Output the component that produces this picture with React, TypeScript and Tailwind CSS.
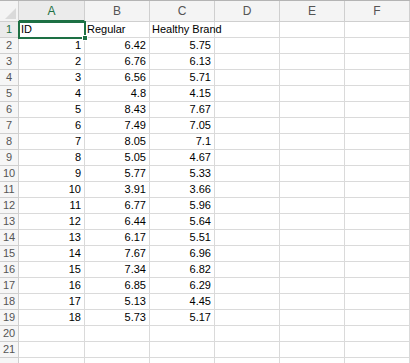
import React from "react";

const data: [number, string, string][] = [
  [1, "6.42", "5.75"],
  [2, "6.76", "6.13"],
  [3, "6.56", "5.71"],
  [4, "4.8", "4.15"],
  [5, "8.43", "7.67"],
  [6, "7.49", "7.05"],
  [7, "8.05", "7.1"],
  [8, "5.05", "4.67"],
  [9, "5.77", "5.33"],
  [10, "3.91", "3.66"],
  [11, "6.77", "5.96"],
  [12, "6.44", "5.64"],
  [13, "6.17", "5.51"],
  [14, "7.67", "6.96"],
  [15, "7.34", "6.82"],
  [16, "6.85", "6.29"],
  [17, "5.13", "4.45"],
  [18, "5.73", "5.17"],
];

const cols = ["A", "B", "C", "D", "E", "F"];

export default function App() {
  const rows: string[][] = [];
  rows.push(["ID", "Regular", "Healthy Brand", "", "", ""]);
  data.forEach((d) => rows.push([String(d[0]), d[1], d[2], "", "", ""]));
  rows.push(["", "", "", "", "", ""]);
  rows.push(["", "", "", "", "", ""]);
  rows.push(["", "", "", "", "", ""]);

  return (
    <div
      className="w-[410px] h-[363px] overflow-hidden bg-white relative"
      style={{ fontFamily: '"Liberation Sans", Arial, sans-serif' }}
    >
      <div className="grid grid-cols-[19px_66px_65px_65px_65px_65px_65px] border-t border-[#b4b4b4]">
        {/* header row */}
        <div className="h-[21px] bg-[#f4f4f4] border-r border-b border-[#cfcfcf] relative">
          <svg className="absolute left-0 top-0" width="19" height="21" viewBox="0 0 19 21">
            <polygon points="5,18 16,18 16,7" fill="#dadada" />
          </svg>
        </div>
        {cols.map((c, i) => (
          <div
            key={c}
            className={
              i === 0
                ? "h-[21px] bg-[#ebebeb] border-r border-[#cfcfcf] border-b-2 border-b-[#1d7044] flex items-center justify-center text-[12px] text-[#1d7044] pt-[1px]"
                : "h-[21px] bg-[#f4f4f4] border-r border-b border-[#cfcfcf] flex items-center justify-center text-[12px] text-[#555555]"
            }
          >
            {c}
          </div>
        ))}
        {rows.map((r, ri) => (
          <React.Fragment key={ri}>
            <div
              className={
                ri === 0
                  ? "h-[16px] bg-[#ebebeb] border-r border-b border-[#cfcfcf] flex items-center justify-center text-[11px] text-[#1d7044]"
                  : "h-[16px] bg-[#f6f6f6] border-r border-b border-[#cfcfcf] flex items-center justify-center text-[11px] text-[#555555]"
              }
            >
              {ri < 21 ? ri + 1 : ""}
            </div>
            {r.map((v, ci) => (
              <div
                key={ci}
                className={
                  ri === 0 || ci > 2
                    ? "h-[16px] border-r border-b border-[#dadada] flex items-center px-[2px] text-[11px] text-black whitespace-nowrap"
                    : "h-[16px] border-r border-b border-[#dadada] flex items-center justify-end px-[3px] text-[11px] text-black whitespace-nowrap"
                }
              >
                {v}
              </div>
            ))}
          </React.Fragment>
        ))}
      </div>
      {/* selection */}
      <div className="absolute left-[18px] top-[21px] w-[68px] h-[18px] border-2 border-[#1d7044] pointer-events-none">
        <div className="absolute right-[-4px] bottom-[-4px] w-[6px] h-[6px] bg-[#1d7044] border border-white" />
      </div>
    </div>
  );
}
